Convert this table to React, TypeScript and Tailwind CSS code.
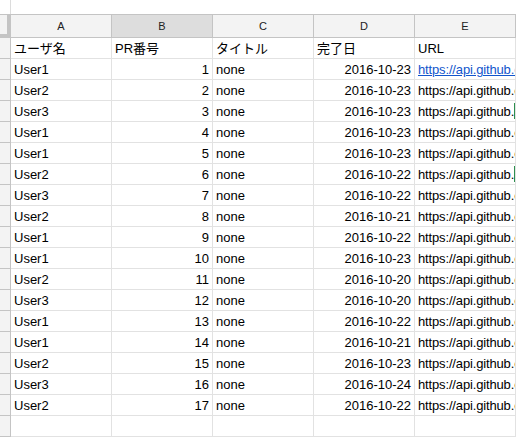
const rows: [string, number, string, string][] = [
  ["User1", 1, "none", "2016-10-23"],
  ["User2", 2, "none", "2016-10-23"],
  ["User3", 3, "none", "2016-10-23"],
  ["User1", 4, "none", "2016-10-23"],
  ["User1", 5, "none", "2016-10-23"],
  ["User2", 6, "none", "2016-10-22"],
  ["User3", 7, "none", "2016-10-22"],
  ["User2", 8, "none", "2016-10-21"],
  ["User1", 9, "none", "2016-10-22"],
  ["User1", 10, "none", "2016-10-23"],
  ["User2", 11, "none", "2016-10-20"],
  ["User3", 12, "none", "2016-10-20"],
  ["User1", 13, "none", "2016-10-22"],
  ["User1", 14, "none", "2016-10-21"],
  ["User2", 15, "none", "2016-10-23"],
  ["User3", 16, "none", "2016-10-24"],
  ["User2", 17, "none", "2016-10-22"],
];

const cols = ["A", "B", "C", "D", "E"];
const cell =
  "h-[21px] border-r border-b border-[#e2e2e2] px-[3px] pt-[2px] flex items-center overflow-hidden whitespace-nowrap";

function RowHead() {
  return <div className="h-[21px] border-r border-b border-[#c4c4c4] bg-[#f3f3f3]" />;
}

export default function App() {
  return (
    <div
      className="w-[516px] h-[439px] overflow-hidden bg-white text-[13px] text-black"
      style={{ fontFamily: '"Liberation Sans", Arial, "Noto Sans CJK JP", sans-serif' }}
    >
      {/* formula bar strip above the column letters */}
      <div className="grid grid-cols-[11px_repeat(5,101px)] h-[14px]">
        <div className="border-r border-[#dcdcdc]" />
      </div>

      <div className="grid grid-cols-[11px_repeat(5,101px)] border-t border-[#c4c4c4]">
        <div className="h-[23px] bg-[#f3f3f3] border-r-[4px] border-b-[4px] border-[#c4c4c4] w-[11px]" />
        {cols.map((c) => (
          <div
            key={c}
            className={`h-[23px] border-r border-b border-[#c4c4c4] flex items-center justify-center text-[11px] text-[#222] ${
              c === "B" ? "bg-[#dddddd]" : "bg-[#f3f3f3]"
            }`}
          >
            {c}
          </div>
        ))}

        <RowHead />
        <div className={cell}>ユーザ名</div>
        <div className={cell}>PR番号</div>
        <div className={cell}>タイトル</div>
        <div className={cell}>完了日</div>
        <div className={cell}>URL</div>

        {rows.map(([user, n, title, date], i) => (
          <div key={n} className="contents">
            <RowHead />
            <div className={cell}>{user}</div>
            <div className={`${cell} justify-end`}>{n}</div>
            <div className={cell}>{title}</div>
            <div className={`${cell} justify-end`}>{date}</div>
            <div className={`${cell} relative tracking-[-0.15px]`}>
              {i === 0 ? (
                <span className="text-[#1155cc] underline">https://api.github.com/repos</span>
              ) : (
                <span>https://api.github.com/repos</span>
              )}
              {(n === 3 || n === 6) && (
                <span className="absolute right-0 top-[2px] h-[16px] w-[1px] bg-[#2d8f4e]" />
              )}
            </div>
          </div>
        ))}

        <RowHead />
        <div className={cell} />
        <div className={cell} />
        <div className={cell} />
        <div className={cell} />
        <div className={cell} />
      </div>
    </div>
  );
}
